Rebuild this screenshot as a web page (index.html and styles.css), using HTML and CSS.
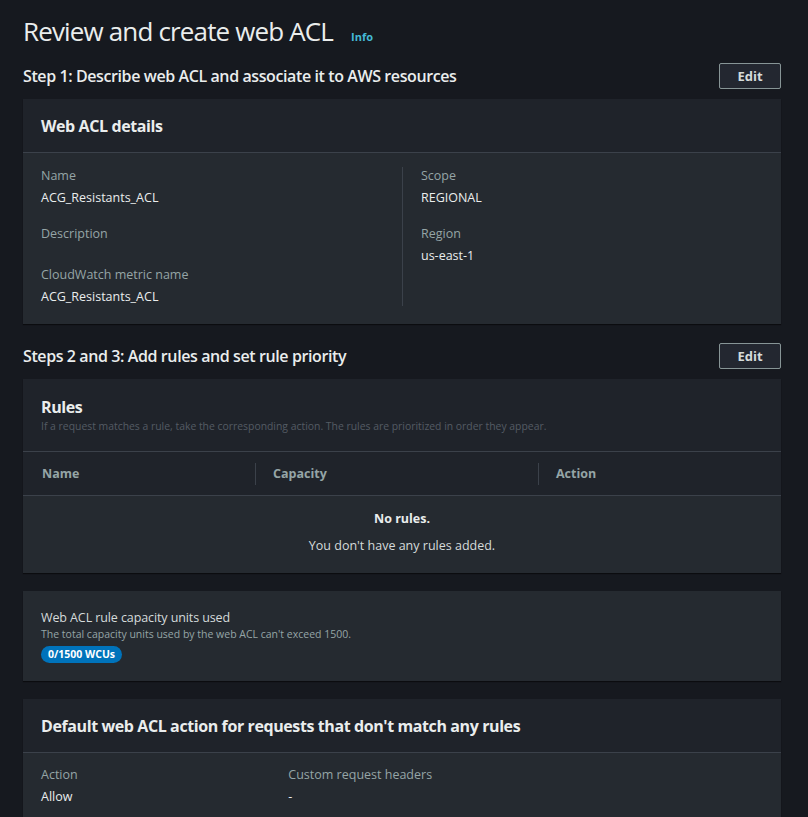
FILE: index.html
```html
<!DOCTYPE html>
<html>
<head>
<meta charset="utf-8">
<link rel="stylesheet" href="styles.css">
</head>
<body>
<div class="page">
  <div class="title-row">
    <h1 class="title">Review and create web ACL</h1>
    <a class="info">Info</a>
  </div>

  <div class="step-row">
    <h2 class="step">Step 1: Describe web ACL and associate it to AWS resources</h2>
    <button class="btn">Edit</button>
  </div>
  <section class="panel">
    <div class="panel-head"><h3 class="panel-title">Web ACL details</h3></div>
    <div class="panel-body cols2">
      <div class="col">
        <div class="kv"><div class="k">Name</div><div class="v">ACG_Resistants_ACL</div></div>
        <div class="kv"><div class="k">Description</div><div class="v"></div></div>
        <div class="kv"><div class="k">CloudWatch metric name</div><div class="v">ACG_Resistants_ACL</div></div>
      </div>
      <div class="col col-right">
        <div class="kv"><div class="k">Scope</div><div class="v">REGIONAL</div></div>
        <div class="kv"><div class="k">Region</div><div class="v">us-east-1</div></div>
      </div>
    </div>
  </section>

  <div class="step-row step-row2">
    <h2 class="step">Steps 2 and 3: Add rules and set rule priority</h2>
    <button class="btn">Edit</button>
  </div>
  <section class="panel">
    <div class="panel-head rules-head">
      <h3 class="panel-title">Rules</h3>
      <p class="panel-desc">If a request matches a rule, take the corresponding action. The rules are prioritized in order they appear.</p>
    </div>
    <div class="thead">
      <div class="th th-name">Name</div>
      <div class="th th-cap">Capacity</div>
      <div class="th th-act">Action</div>
    </div>
    <div class="empty">
      <div class="empty-title">No rules.</div>
      <div class="empty-text">You don't have any rules added.</div>
    </div>
  </section>

  <section class="panel cap-panel">
    <div class="cap-title">Web ACL rule capacity units used</div>
    <div class="cap-desc">The total capacity units used by the web ACL can't exceed 1500.</div>
    <span class="badge">0/1500 WCUs</span>
  </section>

  <section class="panel default-panel">
    <div class="panel-head"><h3 class="panel-title">Default web ACL action for requests that don't match any rules</h3></div>
    <div class="panel-body cols3">
      <div class="kv"><div class="k">Action</div><div class="v">Allow</div></div>
      <div class="kv"><div class="k">Custom request headers</div><div class="v">-</div></div>
      <div></div>
    </div>
  </section>
</div>
</body>
</html>
```

FILE: styles.css
```css
* { box-sizing: border-box; }
html, body {
  margin: 0;
  background: #16191f;
  height: 100%;
  overflow: hidden;
}
body {
  font-family: "Open Sans", "Noto Sans", sans-serif;
  color: #d5dbdb;
}
.page {
  padding: 12px 27px 0 23px;
}
.title-row {
  display: flex;
  align-items: baseline;
  gap: 18px;
  height: 40px;
}
.title {
  margin: 0;
  font-size: 26px;
  font-weight: 400;
  line-height: 38px;
  color: #eaeded;
  letter-spacing: -0.85px;
}
.info {
  font-size: 11px;
  font-weight: 700;
  color: #44b9d6;
}
.step-row {
  display: flex;
  align-items: center;
  justify-content: space-between;
  margin-top: 11px;
  height: 26px;
}
.step-row2 { margin-top: 19px; }
.step {
  margin: 0;
  font-size: 16px;
  font-weight: 600;
  color: #eaeded;
  letter-spacing: -0.4px;
}
.btn {
  font-family: inherit;
  background: #232730;
  border: 1px solid #879596;
  border-radius: 2px;
  color: #d5dbdb;
  font-size: 13px;
  font-weight: 700;
  width: 62px;
  height: 26px;
  padding: 0;
}
.panel {
  background: #252a30;
  margin-top: 10px;
  box-shadow: 0 1px 1px rgba(0,0,0,0.5);
}
.panel-head {
  background: #1f232a;
  border-bottom: 1px solid #3b414a;
  padding: 0 18px;
  height: 54px;
  display: flex;
  flex-direction: column;
  justify-content: center;
}
.panel-title {
  margin: 0;
  font-size: 16px;
  font-weight: 700;
  color: #eaeded;
  letter-spacing: -0.4px;
}
.panel-body {
  padding: 14px 18px 18px;
}
.cols2 {
  display: grid;
  grid-template-columns: 1fr 1fr;
}
.col-right {
  border-left: 1px solid #3b414a;
  padding-left: 18px;
}
.kv {
  display: flex;
  flex-direction: column;
  margin-bottom: 18px;
}
.kv:last-child { margin-bottom: 0; }
.k {
  font-size: 12.5px;
  color: #95a5a6;
  line-height: 18px;
}
.v {
  font-size: 12.5px;
  color: #eaeded;
  line-height: 18px;
  margin-top: 4px;
  min-height: 1px;
}
.rules-head {
  height: 73px;
  justify-content: flex-start;
  padding-top: 17px;
}
.panel-desc {
  margin: 1px 0 0;
  font-size: 10.4px;
  color: #545b64;
}
.thead {
  display: grid;
  grid-template-columns: 232px 283px 1fr;
  height: 44px;
  align-items: center;
  border-bottom: 1px solid #3b414a;
  background: #1f232a;
}
.th {
  font-size: 12.5px;
  font-weight: 700;
  color: #95a5a6;
  padding-left: 17px;
  border-left: 1px solid #3b414a;
  line-height: 22px;
}
.th-name { border-left: none; padding-left: 19px; }
.empty {
  text-align: center;
  padding: 14px 0 18px;
  font-size: 12.5px;
}
.empty-title { font-weight: 700; color: #eaeded; line-height: 18px; }
.empty-text { margin-top: 9px; color: #d5dbdb; line-height: 18px; }
.cap-panel {
  margin-top: 18px;
  padding: 18px 18px 18px;
  height: 90px;
}
.cap-title { font-size: 12.5px; color: #d5dbdb; line-height: 18px; letter-spacing: -0.1px; }
.cap-desc { font-size: 10.5px; color: #95a5a6; line-height: 14px; }
.badge {
  display: inline-block;
  margin-top: 4px;
  background: #0073bb;
  color: #fff;
  font-size: 10.5px;
  font-weight: 700;
  line-height: 17px;
  padding: 0 7px;
  border-radius: 9px;
}
.default-panel { margin-top: 18px; }
.cols3 {
  display: grid;
  grid-template-columns: repeat(3, 1fr);
  gap: 20px;
  padding-top: 13px;
}
```
